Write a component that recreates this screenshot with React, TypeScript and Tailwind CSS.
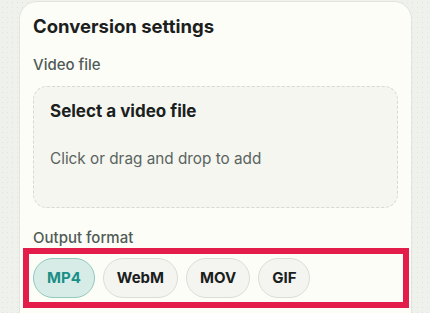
const formats = ["MP4", "WebM", "MOV", "GIF"];

export default function App() {
  const selected = "MP4";
  return (
    <div
      className="h-[313px] w-[430px] overflow-hidden bg-[#eef1ec] bg-[radial-gradient(#e0e4de_0.8px,transparent_0.8px)] bg-[size:5px_5px] pl-[19px] pr-[18px] pt-[1px]"
      style={{ fontFamily: "Inter, 'Noto Sans', sans-serif" }}
    >
      <div className="h-[340px] rounded-[18px] border border-[#e3e4dc] bg-[#fdfdf8] px-[13px] pt-[12px]">
        <h2 className="text-[18.5px] font-bold leading-[24px] text-[#1b201d]">Conversion settings</h2>

        <div className="mt-[17px] text-[15px] font-medium leading-[20px] text-[#505b56]">Video file</div>

        <div className="mt-[11px] h-[122px] rounded-[14px] border border-dashed border-[#d8d9d2] bg-[#f5f6f0] px-[16px] pt-[13px]">
          <div className="text-[17px] font-bold leading-[22px] text-[#1b201d]">Select a video file</div>
          <div className="mt-[27px] text-[15.3px] leading-[20px] text-[#5a6360]">Click or drag and drop to add</div>
        </div>

        <div className="mt-[20px] text-[15px] font-medium leading-[20px] text-[#505b56]">Output format</div>

        <div className="-ml-[10px] -mr-[11px] flex gap-[8px] border-[6px] border-[#e31c4a] p-[4px]">
          {formats.map((f) => (
            <button
              key={f}
              className={
                f === selected
                  ? "h-[40px] rounded-full border border-[#8fc9c0] bg-[#d8ece7] px-[13px] text-[15px] font-bold text-[#1b8f87]"
                  : "h-[40px] rounded-full border border-[#dcddd5] bg-[#f4f5f0] px-[13px] text-[15px] font-bold text-[#1b201d]"
              }
            >
              {f}
            </button>
          ))}
        </div>
      </div>
    </div>
  );
}
